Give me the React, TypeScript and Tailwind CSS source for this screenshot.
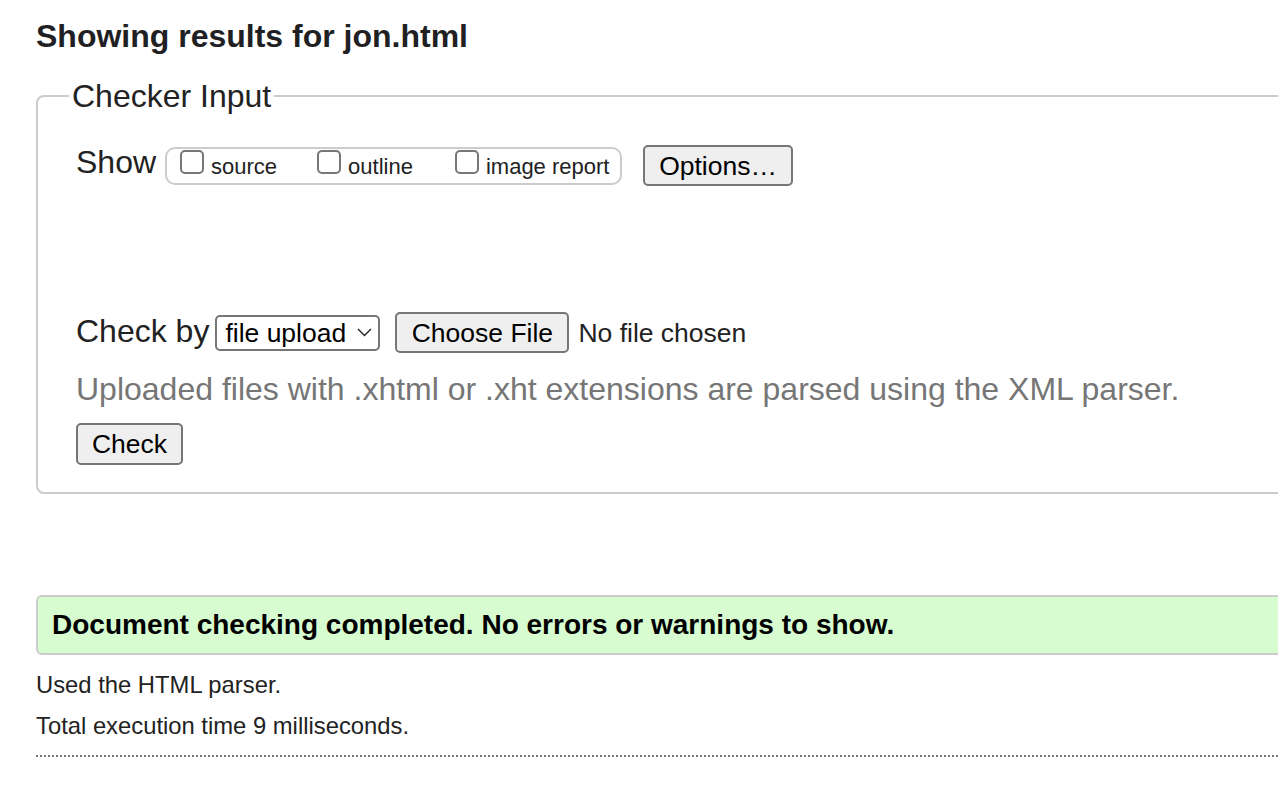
import React from 'react'

const font = "font-['Liberation_Sans',Arial,Helvetica,sans-serif]"

function Check({ label }: { label: string }) {
  return (
    <label className="flex items-start">
      <input
        type="checkbox"
        className="m-0 h-[24px] w-[24px] appearance-none rounded-[5px] border-2 border-[#767676] bg-white"
      />
      <span className="ml-[7px] mt-[4px] text-[22px] leading-[26px] text-[#222]">{label}</span>
    </label>
  )
}

function Btn({ children, className = '' }: { children: React.ReactNode; className?: string }) {
  return (
    <button
      type="button"
      className={`rounded-[5px] border-2 border-[#767676] bg-[#efefef] text-[26.5px] leading-[30px] text-black ${className}`}
    >
      {children}
    </button>
  )
}

export default function App() {
  return (
    <div className={`min-h-screen w-full overflow-hidden bg-white text-[#222] ${font}`}>
      <div className="pl-[36px] pt-[17px] pb-[40px]">
        <h2 className="text-[32px] font-bold leading-[38px] text-[#1f1f24]">Showing results for jon.html</h2>

        <fieldset className="mr-[-80px] mt-[23px] rounded-[8px] border-2 border-[#cccccc] pb-[27px] pl-[38px]">
          <legend className="ml-[-7px] px-[3px] text-[32px] leading-[36px]">Checker Input</legend>

          <div className="mt-[31px] flex h-[41px] items-center">
            <span className="mb-[7px] text-[32px] leading-[36px]">Show</span>
            <div className="ml-[9px] flex h-[38px] w-[457px] items-start rounded-[10px] border-2 border-[#cccccc] pl-[13px] pt-[1px]">
              <Check label="source" />
              <div className="ml-[40px]">
                <Check label="outline" />
              </div>
              <div className="ml-[42px]">
                <Check label="image report" />
              </div>
            </div>
            <Btn className="ml-[21px] h-[41px] w-[150px]">Options…</Btn>
          </div>

          <div className="mt-[126px] flex h-[41px] items-center">
            <span className="mb-[4px] text-[32px] leading-[36px]">Check by</span>
            <div className="relative ml-[6px] h-[36px] w-[165px]">
              <select className="h-full w-full appearance-none rounded-[5px] border-2 border-[#767676] bg-white pl-[8px] text-[26.5px] leading-[30px] text-black">
                <option>file upload</option>
              </select>
              <svg
                className="pointer-events-none absolute right-[8px] top-[13px]"
                width="15"
                height="9"
                viewBox="0 0 15 9"
                fill="none"
              >
                <path d="M1 1l6.5 6.5L14 1" stroke="#222" strokeWidth="1.4" />
              </svg>
            </div>
            <Btn className="ml-[15px] h-[41px] w-[174px]">Choose File</Btn>
            <span className="ml-[9px] text-[26.5px] leading-[30px]">No file chosen</span>
          </div>

          <p className="mt-[18px] whitespace-nowrap text-[32px] leading-[36px] text-[#767676]">
            Uploaded files with .xhtml or .xht extensions are parsed using the XML parser.
          </p>

          <Btn className="mt-[16px] h-[42px] w-[107px]">Check</Btn>
        </fieldset>

        <div className="mr-[-80px] mt-[101px] rounded-[6px] border-2 border-[#cccccc] bg-[#d6fcd0] pb-[11px] pl-[14px] pt-[10px]">
          <p className="text-[28px] font-bold leading-[35px] text-black">
            Document checking completed. No errors or warnings to show.
          </p>
        </div>

        <p className="mt-[16px] text-[23.8px] leading-[28px]">Used the HTML parser.</p>
        <p className="mt-[13px] text-[23.8px] leading-[28px]">Total execution time 9 milliseconds.</p>

        <div className="mr-[-80px] mt-[15px] border-t-2 border-dotted border-[#777777]" />
      </div>
    </div>
  )
}
